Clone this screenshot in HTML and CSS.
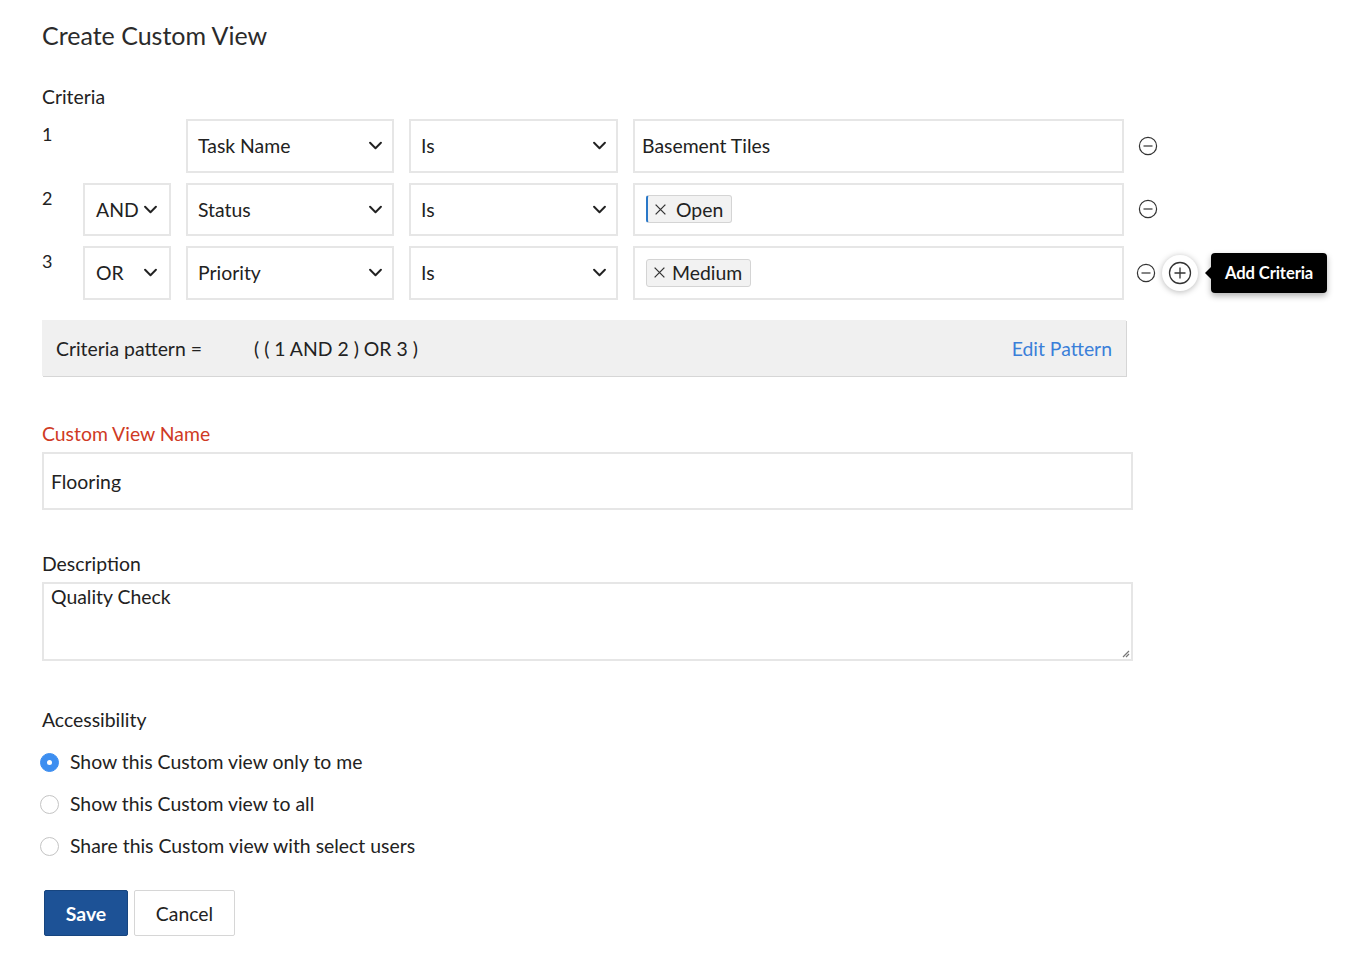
FILE: index.html
```html
<!DOCTYPE html>
<html>
<head>
<meta charset="utf-8">
<link rel="stylesheet" href="styles.css">
</head>
<body>
<div class="page">
  <h1 class="title">Create Custom View</h1>

  <div class="label criteria-label">Criteria</div>

  <div class="criteria">
    <div class="crow">
      <div class="num">1</div>
      <div class="logic empty"></div>
      <div class="box sel field"><span>Task Name</span><svg class="chev" viewBox="0 0 12 8"><path d="M1 1.5 L6 6.5 L11 1.5"/></svg></div>
      <div class="box sel op"><span>Is</span><svg class="chev" viewBox="0 0 12 8"><path d="M1 1.5 L6 6.5 L11 1.5"/></svg></div>
      <div class="box val"><span class="valtext">Basement Tiles</span></div>
      <div class="acts">
        <svg class="minus" viewBox="0 0 20 20"><circle cx="10" cy="10" r="8.6"/><path d="M5.5 10 H14.5"/></svg>
      </div>
    </div>

    <div class="crow">
      <div class="num">2</div>
      <div class="box sel logic"><span>AND</span><svg class="chev" viewBox="0 0 12 8"><path d="M1 1.5 L6 6.5 L11 1.5"/></svg></div>
      <div class="box sel field"><span>Status</span><svg class="chev" viewBox="0 0 12 8"><path d="M1 1.5 L6 6.5 L11 1.5"/></svg></div>
      <div class="box sel op"><span>Is</span><svg class="chev" viewBox="0 0 12 8"><path d="M1 1.5 L6 6.5 L11 1.5"/></svg></div>
      <div class="box val tags"><span class="tag focused"><svg class="x" viewBox="0 0 12 12"><path d="M1.5 1.5 L10.5 10.5 M10.5 1.5 L1.5 10.5"/></svg>Open</span></div>
      <div class="acts">
        <svg class="minus" viewBox="0 0 20 20"><circle cx="10" cy="10" r="8.6"/><path d="M5.5 10 H14.5"/></svg>
      </div>
    </div>

    <div class="crow">
      <div class="num">3</div>
      <div class="box sel logic"><span>OR</span><svg class="chev" viewBox="0 0 12 8"><path d="M1 1.5 L6 6.5 L11 1.5"/></svg></div>
      <div class="box sel field"><span>Priority</span><svg class="chev" viewBox="0 0 12 8"><path d="M1 1.5 L6 6.5 L11 1.5"/></svg></div>
      <div class="box sel op"><span>Is</span><svg class="chev" viewBox="0 0 12 8"><path d="M1 1.5 L6 6.5 L11 1.5"/></svg></div>
      <div class="box val tags"><span class="tag tag-m"><svg class="x" viewBox="0 0 12 12"><path d="M1.5 1.5 L10.5 10.5 M10.5 1.5 L1.5 10.5"/></svg>Medium</span></div>
      <div class="acts last">
        <svg class="minus" viewBox="0 0 20 20"><circle cx="10" cy="10" r="8.6"/><path d="M5.5 10 H14.5"/></svg>
        <span class="plus-wrap"><svg class="plus" viewBox="0 0 24 24"><circle cx="12" cy="12" r="10.5"/><path d="M6.5 12 H17.5 M12 6.5 V17.5"/></svg></span>
        <span class="tooltip">Add Criteria</span>
      </div>
    </div>
  </div>

  <div class="pattern">
    <span class="pat-label">Criteria pattern =</span>
    <span class="pat-value">( ( 1 AND 2 ) OR 3 )</span>
    <span class="edit">Edit Pattern</span>
  </div>

  <div class="label req">Custom View Name</div>
  <div class="input name">Flooring</div>

  <div class="label desc-label">Description</div>
  <div class="textarea">Quality Check
    <svg class="grip" viewBox="0 0 10 10"><path d="M9 3 L3 9 M9 6 L6 9"/></svg>
  </div>

  <div class="label acc-label">Accessibility</div>
  <div class="radios">
    <div class="radio-row"><span class="radio on"></span>Show this Custom view only to me</div>
    <div class="radio-row"><span class="radio"></span>Show this Custom view to all</div>
    <div class="radio-row"><span class="radio"></span>Share this Custom view with select users</div>
  </div>

  <div class="buttons">
    <span class="btn save">Save</span>
    <span class="btn cancel">Cancel</span>
  </div>
</div>
</body>
</html>
```
FILE: styles.css
```css
* { box-sizing: border-box; }
html, body { margin: 0; padding: 0; background: #fff; }
body {
  font-family: Lato, "Open Sans", "Liberation Sans", sans-serif;
  color: #222;
  font-size: 19.4px;
}
.page { padding: 18px 0 0 42px; width: 1360px; }
.title {
  margin: 0;
  font-weight: 400;
  font-size: 25px;
  line-height: 34px;
  color: #2b2b2b;
}
.label { font-size: 19.4px; line-height: 24px; }
.criteria-label { margin-top: 33px; }
.criteria { margin-top: 10px; display: flex; flex-direction: column; gap: 10px; }
.crow { display: flex; align-items: stretch; height: 53.5px; }
.num { width: 41px; font-size: 18px; line-height: 20px; padding-top: 5px; }
.box {
  border: 2px solid #e6e6e6;
  background: #fff;
  display: flex;
  align-items: center;
}
.logic { width: 88px; padding: 0 12px 0 11px; margin-right: 15px; }
.logic.empty { border: none; }
.field { width: 208px; padding: 0 10px 0 10px; margin-right: 15px; }
.op { width: 209px; padding: 0 10px 0 10px; margin-right: 15px; }
.val { width: 491px; padding: 0 7px; }
.sel { justify-content: space-between; }
.chev { width: 13px; height: 9px; fill: none; stroke: #222; stroke-width: 1.8; stroke-linecap: round; stroke-linejoin: round; }
.tags { padding-left: 11px; }
.tag {
  display: inline-flex; align-items: center;
  height: 28px;
  background: #f2f2f2;
  border: 1px solid #d4d4d4;
  border-radius: 3px;
  padding: 0 8px 0 6px;
}
.tag.focused { border-left: 2px solid #2a78c8; padding-left: 6px; }
.tag .x { width: 13px; height: 13px; fill: none; stroke: #333; stroke-width: 1.2; margin-right: 9px; }
.tag-m .x { margin-right: 6px; }
.acts { display: flex; align-items: center; padding-left: 14px; position: relative; }
.minus { width: 20px; height: 20px; fill: none; stroke: #333; stroke-width: 1.2; }
.acts.last { padding-left: 12px; }
.plus-wrap {
  margin-left: 6px;
  width: 36px; height: 36px; border-radius: 50%;
  background: #fff;
  box-shadow: 0 1px 6px rgba(0,0,0,0.28);
  display: flex; align-items: center; justify-content: center;
}
.plus { width: 24px; height: 24px; fill: none; stroke: #333; stroke-width: 1.3; }
.tooltip {
  position: relative;
  margin-left: 13px;
  background: #000;
  color: #fff;
  font-weight: 700;
  font-size: 16.6px;
  height: 40px;
  line-height: 40px;
  padding: 0 14px;
  border-radius: 4px;
  box-shadow: 0 3px 6px rgba(0,0,0,0.3);
  letter-spacing: -0.1px;
}
.tooltip::before {
  content: "";
  position: absolute;
  left: -6px; top: 14px;
  border-top: 6px solid transparent;
  border-bottom: 6px solid transparent;
  border-right: 6px solid #000;
}
.pattern {
  margin-top: 20.5px;
  width: 1084px;
  height: 56px;
  background: #f0f0f0;
  box-shadow: 1px 1px 0 #d6d6d6;
  display: flex;
  align-items: center;
  padding: 0 14px;
}
.pat-label { width: 198px; }
.pat-value { flex: 1; }
.edit { color: #3a7fd9; }
.req { color: #cf3a24; margin-top: 46px; }
.input {
  margin-top: 6px;
  width: 1091px; height: 58px;
  border: 2px solid #e6e6e6;
  display: flex; align-items: center;
  padding: 0 7px;
}
.desc-label { margin-top: 42px; }
.textarea {
  position: relative;
  margin-top: 6px;
  width: 1091px; height: 79px;
  border: 2px solid #e6e6e6;
  padding: 1px 7px;
  line-height: 24px;
}
.grip { position: absolute; right: 1px; bottom: 1px; width: 10px; height: 10px; fill: none; stroke: #777; stroke-width: 1.2; }
.acc-label { margin-top: 47px; }
.radios { margin-top: 18px; display: flex; flex-direction: column; gap: 18px; }
.radio-row { display: flex; align-items: center; line-height: 24px; }
.radio {
  width: 19px; height: 19px; border-radius: 50%;
  border: 1px solid #c4c4c4;
  background: #fff;
  margin-left: -2px;
  margin-right: 11px;
  position: relative;
}
.radio.on { background: #3d8ef0; border-color: #3d8ef0; }
.radio.on::after {
  content: ""; position: absolute; left: 6px; top: 6px;
  width: 5px; height: 5px; border-radius: 50%; background: #fff;
}
.buttons { margin-top: 32px; margin-left: 2px; display: flex; gap: 6px; }
.btn {
  height: 46px; display: inline-flex; align-items: center; justify-content: center;
  border-radius: 2px;
}
.save { width: 84px; background: #1d5296; color: #fff; font-weight: 700; border: 1px solid #17457f; }
.cancel { width: 101px; border: 1px solid #d6d6d6; background: #fff; color: #222; }
```
